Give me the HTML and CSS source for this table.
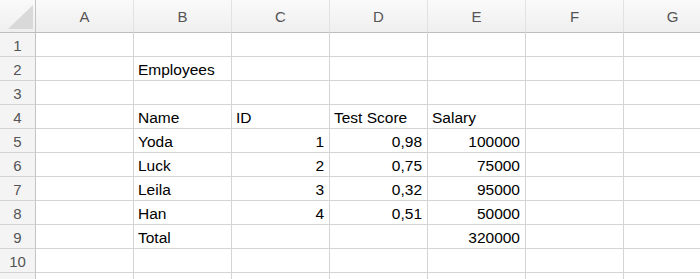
FILE: index.html
```
<!DOCTYPE html>
<html lang="en">

<head>
  <meta charset="UTF-8" />
  <title>Employees</title>

  <link rel="stylesheet" href="styles.css">
</head>

<body>
  <div class="sheet">
    <!-- column headers -->
    <div class="corner"><span class="corner-tri"></span></div>
    <div class="col-head">A</div>
    <div class="col-head">B</div>
    <div class="col-head">C</div>
    <div class="col-head">D</div>
    <div class="col-head">E</div>
    <div class="col-head">F</div>
    <div class="col-head">G</div>

    <div class="row-head">1</div>
    <div class="cell"></div><div class="cell"></div><div class="cell"></div><div class="cell"></div><div class="cell"></div><div class="cell"></div><div class="cell"></div>

    <div class="row-head">2</div>
    <div class="cell"></div><div class="cell">Employees</div><div class="cell"></div><div class="cell"></div><div class="cell"></div><div class="cell"></div><div class="cell"></div>

    <div class="row-head">3</div>
    <div class="cell"></div><div class="cell"></div><div class="cell"></div><div class="cell"></div><div class="cell"></div><div class="cell"></div><div class="cell"></div>

    <div class="row-head">4</div>
    <div class="cell"></div><div class="cell">Name</div><div class="cell">ID</div><div class="cell">Test Score</div><div class="cell">Salary</div><div class="cell"></div><div class="cell"></div>

    <div class="row-head">5</div>
    <div class="cell"></div><div class="cell">Yoda</div><div class="cell num">1</div><div class="cell num">0,98</div><div class="cell num">100000</div><div class="cell"></div><div class="cell"></div>

    <div class="row-head">6</div>
    <div class="cell"></div><div class="cell">Luck</div><div class="cell num">2</div><div class="cell num">0,75</div><div class="cell num">75000</div><div class="cell"></div><div class="cell"></div>

    <div class="row-head">7</div>
    <div class="cell"></div><div class="cell">Leila</div><div class="cell num">3</div><div class="cell num">0,32</div><div class="cell num">95000</div><div class="cell"></div><div class="cell"></div>

    <div class="row-head">8</div>
    <div class="cell"></div><div class="cell">Han</div><div class="cell num">4</div><div class="cell num">0,51</div><div class="cell num">50000</div><div class="cell"></div><div class="cell"></div>

    <div class="row-head">9</div>
    <div class="cell"></div><div class="cell">Total</div><div class="cell"></div><div class="cell"></div><div class="cell num">320000</div><div class="cell"></div><div class="cell"></div>

    <div class="row-head">10</div>
    <div class="cell"></div><div class="cell"></div><div class="cell"></div><div class="cell"></div><div class="cell"></div><div class="cell"></div><div class="cell"></div>

    <!-- next row, only its top edge shows -->
    <div class="row-head"></div>
    <div class="cell"></div><div class="cell"></div><div class="cell"></div><div class="cell"></div><div class="cell"></div><div class="cell"></div><div class="cell"></div>
  </div>
</body>

</html>
```

FILE: styles.css
```
body {
  margin: 0;
  background: #fff;
  overflow: hidden;
  font-family: "Liberation Sans", Arial, sans-serif;
}

.sheet {
  display: grid;
  grid-template-columns: 36px repeat(7, 98px);
  grid-template-rows: 33px repeat(11, 24px);
}

.corner,
.col-head,
.row-head,
.cell {
  box-sizing: border-box;
  border-right: 1px solid #d4d4d4;
  border-bottom: 1px solid #d4d4d4;
}

.corner {
  position: relative;
  background: linear-gradient(#fafafa, #efefef);
  border-right-color: #c4c4c4;
  border-bottom-color: #bdbdbd;
}

/* little select-all triangle */
.corner-tri {
  position: absolute;
  right: 2px;
  bottom: 3px;
  width: 0;
  height: 0;
  border-left: 25px solid transparent;
  border-bottom: 24px solid #d9d9d9;
}

.col-head {
  display: flex;
  align-items: center;
  justify-content: center;
  padding-top: 1px;
  background: linear-gradient(#fafafa, #efefef);
  border-right-color: #e2e2e2;
  border-bottom-color: #bdbdbd;
  color: #555;
  font-size: 15px;
}

.row-head {
  display: flex;
  align-items: flex-end;
  justify-content: center;
  padding-bottom: 1px;
  background: #f4f4f4;
  border-right-color: #c4c4c4;
  color: #555;
  font-size: 15px;
  line-height: 18px;
}

.cell {
  display: flex;
  align-items: flex-end;
  padding: 0 5px 1px 4px;
  color: #000;
  font-size: 15.5px;
  line-height: 18px;
  white-space: nowrap;
}

.cell.num {
  justify-content: flex-end;
}
```
